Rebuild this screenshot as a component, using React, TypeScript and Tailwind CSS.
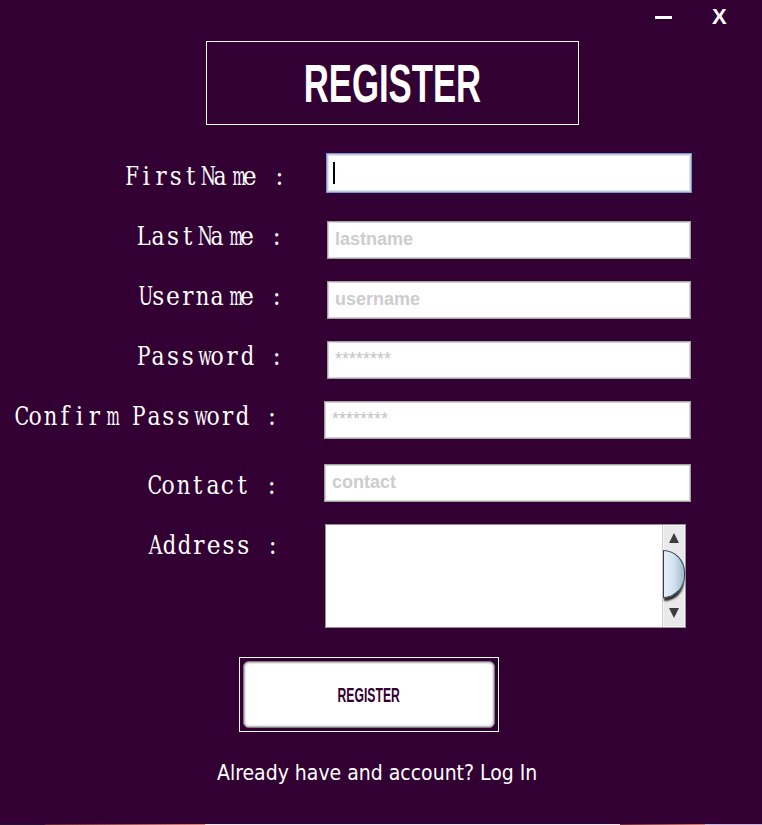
import React from "react";

const serifFont = { fontFamily: '"DejaVu Serif Condensed", "DejaVu Serif", serif' };
const sansFont = { fontFamily: '"Liberation Sans", Arial, sans-serif' };

const glyphScale: Record<string, string> = {
  m: "scale-x-[0.6]",
  w: "scale-x-[0.68]",
  N: "scale-x-[0.74]",
  C: "scale-x-[0.82]",
  P: "scale-x-[0.86]",
  A: "scale-x-[0.8]",
  U: "scale-x-[0.74]",
  L: "scale-x-[0.9]",
  F: "scale-x-[0.84]",
  n: "scale-x-[0.9]",
  d: "scale-x-[0.9]",
  u: "scale-x-[0.9]",
  o: "scale-x-[0.94]",
  a: "scale-x-[0.94]",
};

function MonoLabel({ text, x, mt }: { text: string; x: number; mt: string }) {
  return (
    <div
      className={`shrink-0 ${mt} whitespace-nowrap text-[26px] leading-[27px] text-white`}
      style={{ ...serifFont, paddingLeft: x }}
    >
      {text.split("").map((c, i) => (
        <span key={i} className="inline-block w-[14.8px] text-center">
          <span className={`inline-block ${glyphScale[c] ?? ""}`}>{c === " " ? "\u00a0" : c}</span>
        </span>
      ))}
    </div>
  );
}

const fieldBase =
  "relative shrink-0 bg-white border border-[#a2a2a2] shadow-[inset_0_0_0_1px_#d6d6d6]";

function Placeholder({ text, stars }: { text: string; stars?: boolean }) {
  return (
    <div
      className={`pl-[7px] pt-[8px] text-[18px] leading-[18px] ${stars ? "text-[#c4c4c4]" : "font-bold text-[#cdcdcd]"}`}
      style={sansFont}
    >
      {text}
    </div>
  );
}

function LabelCol({ w, children }: { w: number; children: React.ReactNode }) {
  return (
    <div className="shrink-0" style={{ width: w }}>
      {children}
    </div>
  );
}

export default function App() {
  return (
    <div className="relative flex h-[825px] w-[762px] flex-col overflow-hidden bg-[#330033]">
      {/* window controls */}
      <div className="absolute left-[655px] top-[16px] h-[3px] w-[17px] bg-white" />
      <div
        className="absolute left-[712px] top-[4px] text-[22px] font-bold leading-[26px] text-white"
        style={sansFont}
      >
        X
      </div>

      {/* title */}
      <div className="ml-[206px] mt-[41px] flex h-[84px] w-[373px] items-center justify-center border border-white">
        <span
          className="inline-block scale-x-[0.655] text-[53px] font-bold leading-none text-white"
          style={sansFont}
        >
          REGISTER
        </span>
      </div>

      {/* rows */}
      <div className="flex mt-[28px]">
        <LabelCol w={326}>
          <MonoLabel text="FirstName :" x={124} mt="mt-[10px]" />
        </LabelCol>
        <div className="relative h-[40px] w-[366px] shrink-0 border border-[#7898c8] bg-white shadow-[inset_0_0_0_1px_#b9cbe4,inset_0_0_0_2px_#e4e4e4]">
          <div className="absolute left-[6px] top-[8px] h-[22px] w-[2px] bg-black" />
        </div>
      </div>

      <div className="flex mt-[28px]">
        <LabelCol w={327}>
          <MonoLabel text="LastName :" x={136} mt="mt-[2px]" />
        </LabelCol>
        <div className={`${fieldBase} h-[38px] w-[364px]`}>
          <Placeholder text="lastname" />
        </div>
      </div>

      <div className="flex mt-[22px]">
        <LabelCol w={327}>
          <MonoLabel text="Username :" x={136} mt="mt-[2px]" />
        </LabelCol>
        <div className={`${fieldBase} h-[38px] w-[364px]`}>
          <Placeholder text="username" />
        </div>
      </div>

      <div className="flex mt-[22px]">
        <LabelCol w={327}>
          <MonoLabel text="Password :" x={136} mt="mt-[2px]" />
        </LabelCol>
        <div className={`${fieldBase} h-[38px] w-[364px]`}>
          <Placeholder text="********" stars />
        </div>
      </div>

      <div className="flex mt-[22px]">
        <LabelCol w={324}>
          <MonoLabel text="Confirm Password :" x={13} mt="mt-[2px]" />
        </LabelCol>
        <div className={`${fieldBase} h-[38px] w-[367px]`}>
          <Placeholder text="********" stars />
        </div>
      </div>

      <div className="flex mt-[25px]">
        <LabelCol w={324}>
          <MonoLabel text="Contact :" x={146} mt="mt-[8px]" />
        </LabelCol>
        <div className={`${fieldBase} h-[38px] w-[367px]`}>
          <Placeholder text="contact" />
        </div>
      </div>

      <div className="flex mt-[22px]">
        <LabelCol w={325}>
          <MonoLabel text="Address :" x={147} mt="mt-[8px]" />
        </LabelCol>
        <div className="flex h-[104px] w-[361px] shrink-0 border border-[#9b8fa0] bg-white">
          <div className="flex-1" />
          <div className="flex w-[23px] flex-col items-center border-l border-[#cfcfcf] bg-[#e9e9e9] shadow-[inset_0_0_0_1px_#f6f6f6]">
            <svg width="12" height="12" viewBox="0 0 12 12" className="mt-[7px]">
              <path d="M6 1 L11 11 L1 11 Z" fill="#3c3c3c" />
            </svg>
            <div className="mt-[6px] h-[48px] w-[22px] self-start rounded-r-full border border-[#34404c] bg-gradient-to-r from-[#e6eef6] via-[#d3e2f0] to-[#9fb8cf] shadow-[0_4px_2px_-1px_#2a2a2a]" />
            <div className="flex-1" />
            <svg width="12" height="12" viewBox="0 0 12 12" className="mb-[8px]">
              <path d="M1 1 L11 1 L6 11 Z" fill="#3c3c3c" />
            </svg>
          </div>
        </div>
      </div>

      {/* register button */}
      <div className="ml-[239px] mt-[29px] h-[75px] w-[260px] border border-white p-[3px]">
        <div className="flex h-full w-full items-center justify-center rounded-[6px] border border-[#7c7c7c] bg-white shadow-[inset_0_0_2px_1px_#a8a8a8]">
          <span
            className="inline-block scale-x-[0.58] text-[21px] font-bold leading-none text-[#330033]"
            style={sansFont}
          >
            REGISTER
          </span>
        </div>
      </div>

      <div
        className="ml-[217px] mt-[31px] whitespace-nowrap text-[21px] leading-[21px] text-white"
        style={{ fontFamily: '"DejaVu Sans Condensed", "DejaVu Sans", sans-serif' }}
      >
        Already have and account? Log In
      </div>

      <div className="flex-1" />
      <div className="flex h-[1px] w-full">
        <div className="w-[45px] bg-[#2a1030]" />
        <div className="w-[160px] bg-gradient-to-r from-[#5a2030] to-[#e08878]" />
        <div className="w-[415px] bg-[#f4e6e6]" />
        <div className="w-[85px] bg-gradient-to-r from-[#6a2838] to-[#d88070]" />
        <div className="flex-1 bg-[#c8b8e0]" />
      </div>
    </div>
  );
}
